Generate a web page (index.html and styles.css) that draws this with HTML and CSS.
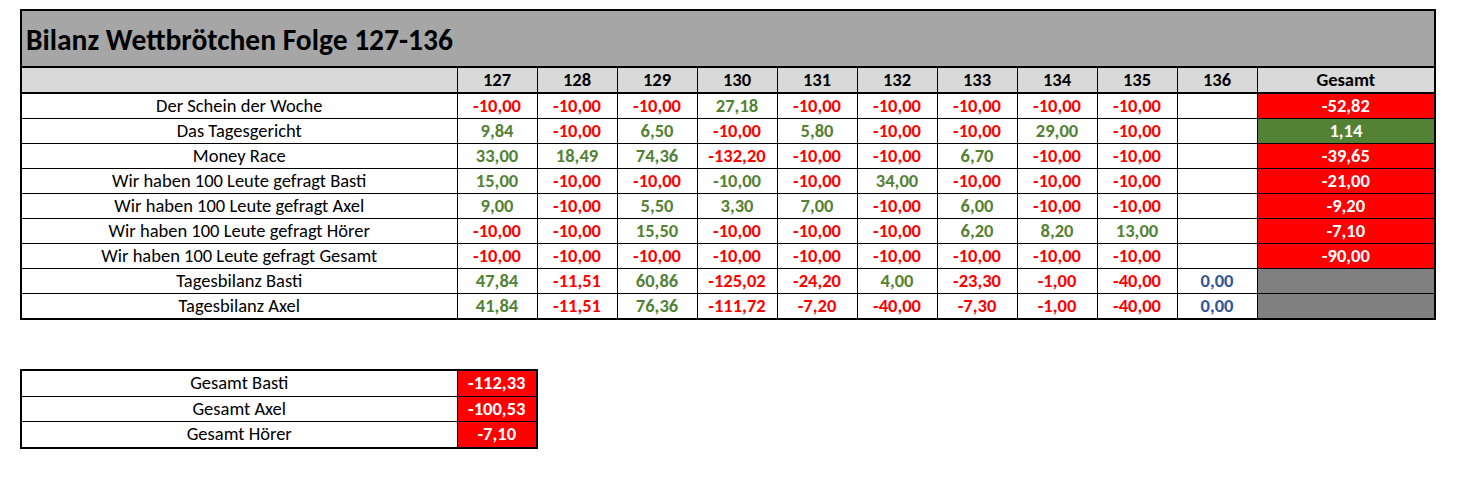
FILE: index.html
```html
<!DOCTYPE html>
<html lang="de">
<head>
<meta charset="utf-8">
<title>Bilanz Wettbrötchen Folge 127-136</title>
<link rel="stylesheet" href="styles.css">
</head>
<body>
<div class="page">
<table class="bilanz">
  <colgroup>
    <col class="c-label"><col class="c-num"><col class="c-num"><col class="c-num"><col class="c-num"><col class="c-num"><col class="c-num"><col class="c-num"><col class="c-num"><col class="c-num"><col class="c-num"><col class="c-total">
  </colgroup>
  <thead>
    <tr class="title-row"><th colspan="12" class="title">Bilanz Wettbrötchen Folge 127-136</th></tr>
    <tr class="head-row">
      <th></th><th>127</th><th>128</th><th>129</th><th>130</th><th>131</th><th>132</th><th>133</th><th>134</th><th>135</th><th>136</th><th>Gesamt</th>
    </tr>
  </thead>
  <tbody>
    <tr><td class="label">Der Schein der Woche</td><td class="neg">-10,00</td><td class="neg">-10,00</td><td class="neg">-10,00</td><td class="pos">27,18</td><td class="neg">-10,00</td><td class="neg">-10,00</td><td class="neg">-10,00</td><td class="neg">-10,00</td><td class="neg">-10,00</td><td></td><td class="tot-neg">-52,82</td></tr>
    <tr><td class="label">Das Tagesgericht</td><td class="pos">9,84</td><td class="neg">-10,00</td><td class="pos">6,50</td><td class="neg">-10,00</td><td class="pos">5,80</td><td class="neg">-10,00</td><td class="neg">-10,00</td><td class="pos">29,00</td><td class="neg">-10,00</td><td></td><td class="tot-pos">1,14</td></tr>
    <tr><td class="label">Money Race</td><td class="pos">33,00</td><td class="pos">18,49</td><td class="pos">74,36</td><td class="neg">-132,20</td><td class="neg">-10,00</td><td class="neg">-10,00</td><td class="pos">6,70</td><td class="neg">-10,00</td><td class="neg">-10,00</td><td></td><td class="tot-neg">-39,65</td></tr>
    <tr><td class="label">Wir haben 100 Leute gefragt Basti</td><td class="pos">15,00</td><td class="neg">-10,00</td><td class="neg">-10,00</td><td class="pos">-10,00</td><td class="neg">-10,00</td><td class="pos">34,00</td><td class="neg">-10,00</td><td class="neg">-10,00</td><td class="neg">-10,00</td><td></td><td class="tot-neg">-21,00</td></tr>
    <tr><td class="label">Wir haben 100 Leute gefragt Axel</td><td class="pos">9,00</td><td class="neg">-10,00</td><td class="pos">5,50</td><td class="pos">3,30</td><td class="pos">7,00</td><td class="neg">-10,00</td><td class="pos">6,00</td><td class="neg">-10,00</td><td class="neg">-10,00</td><td></td><td class="tot-neg">-9,20</td></tr>
    <tr><td class="label">Wir haben 100 Leute gefragt Hörer</td><td class="neg">-10,00</td><td class="neg">-10,00</td><td class="pos">15,50</td><td class="neg">-10,00</td><td class="neg">-10,00</td><td class="neg">-10,00</td><td class="pos">6,20</td><td class="pos">8,20</td><td class="pos">13,00</td><td></td><td class="tot-neg">-7,10</td></tr>
    <tr><td class="label">Wir haben 100 Leute gefragt Gesamt</td><td class="neg">-10,00</td><td class="neg">-10,00</td><td class="neg">-10,00</td><td class="neg">-10,00</td><td class="neg">-10,00</td><td class="neg">-10,00</td><td class="neg">-10,00</td><td class="neg">-10,00</td><td class="neg">-10,00</td><td></td><td class="tot-neg">-90,00</td></tr>
    <tr><td class="label">Tagesbilanz Basti</td><td class="pos">47,84</td><td class="neg">-11,51</td><td class="pos">60,86</td><td class="neg">-125,02</td><td class="neg">-24,20</td><td class="pos">4,00</td><td class="neg">-23,30</td><td class="neg">-1,00</td><td class="neg">-40,00</td><td class="zero">0,00</td><td class="tot-gray"></td></tr>
    <tr><td class="label">Tagesbilanz Axel</td><td class="pos">41,84</td><td class="neg">-11,51</td><td class="pos">76,36</td><td class="neg">-111,72</td><td class="neg">-7,20</td><td class="neg">-40,00</td><td class="neg">-7,30</td><td class="neg">-1,00</td><td class="neg">-40,00</td><td class="zero">0,00</td><td class="tot-gray"></td></tr>
  </tbody>
</table>

<table class="summary">
  <colgroup><col class="c-label"><col class="c-num"></colgroup>
  <tbody>
    <tr><td class="label">Gesamt Basti</td><td class="tot-neg">-112,33</td></tr>
    <tr><td class="label">Gesamt Axel</td><td class="tot-neg">-100,53</td></tr>
    <tr><td class="label">Gesamt Hörer</td><td class="tot-neg">-7,10</td></tr>
  </tbody>
</table>
</div>
</body>
</html>
```

FILE: styles.css
```css
html, body {
  margin: 0;
  padding: 0;
  background: #ffffff;
}

body {
  font-family: Carlito, Calibri, Lato, "Open Sans", sans-serif;
  font-size: 18.5px;
  color: #000000;
}

.page {
  padding: 9px 0 0 20px;
  display: flex;
  flex-direction: column;
  align-items: flex-start;
  gap: 49px;
}

table {
  border-collapse: collapse;
  table-layout: fixed;
}

.bilanz {
  width: 1414px;
  border: 2px solid #000;
}

.summary {
  width: 517px;
  border: 2px solid #000;
}

.c-label { width: 436px; }
.c-num { width: 80px; }
.c-total { width: 178px; }

th, td {
  border: 1px solid #000;
  padding: 0;
  text-align: center;
  vertical-align: middle;
  white-space: nowrap;
  line-height: 20px;
}

.title-row th {
  height: 52px;
  background: #a6a6a6;
  text-align: left;
  padding: 3px 0 0 4px;
  font-size: 29.5px;
  font-weight: bold;
  line-height: 34px;
  border-bottom: 2px solid #000;
}

.head-row th {
  height: 24px;
  background: #d9d9d9;
  font-weight: bold;
  border-bottom: 2px solid #000;
}

.bilanz tbody td {
  height: 24px;
}

.summary td {
  height: 24.5px;
}

td.label {
  font-weight: normal;
}

.neg, .pos, .zero, .tot-neg, .tot-pos {
  font-weight: bold;
}

.neg { color: #ff0000; }
.pos { color: #548235; }
.zero { color: #2f5597; }

.tot-neg {
  background: #ff0000;
  color: #ffffff;
}

.tot-pos {
  background: #548235;
  color: #ffffff;
}

.tot-gray {
  background: #808080;
}
```
